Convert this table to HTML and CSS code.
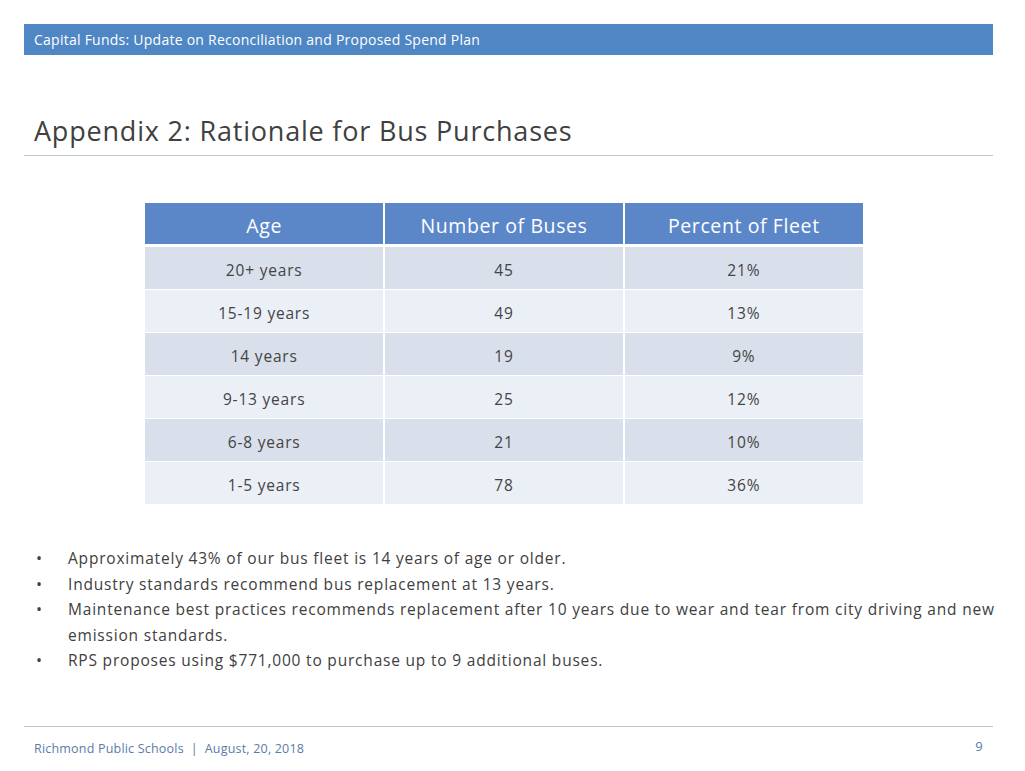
FILE: index.html
```html
<!DOCTYPE html>
<html>
<head>
<meta charset="utf-8">
<link rel="stylesheet" href="styles.css">
</head>
<body>
<div class="slide">
  <div class="topbar">Capital Funds: Update on Reconciliation and Proposed Spend Plan</div>
  <h1 class="title">Appendix 2: Rationale for Bus Purchases</h1>
  <div class="table-wrap">
    <table class="fleet">
      <thead>
        <tr><th>Age</th><th>Number of Buses</th><th>Percent of Fleet</th></tr>
      </thead>
      <tbody>
        <tr class="odd"><td>20+ years</td><td>45</td><td>21%</td></tr>
        <tr class="even"><td>15-19 years</td><td>49</td><td>13%</td></tr>
        <tr class="odd"><td>14 years</td><td>19</td><td>9%</td></tr>
        <tr class="even"><td>9-13 years</td><td>25</td><td>12%</td></tr>
        <tr class="odd"><td>6-8 years</td><td>21</td><td>10%</td></tr>
        <tr class="even"><td>1-5 years</td><td>78</td><td>36%</td></tr>
      </tbody>
    </table>
  </div>
  <ul class="bullets">
    <li>Approximately 43% of our bus fleet is 14 years of age or older.</li>
    <li>Industry standards recommend bus replacement at 13 years.</li>
    <li>Maintenance best practices recommends replacement after 10 years due to wear and tear from city driving and new emission standards.</li>
    <li>RPS proposes using $771,000 to purchase up to 9 additional buses.</li>
  </ul>
  <div class="footer">
    <span class="foot-text">Richmond Public Schools &nbsp;|&nbsp; August, 20, 2018</span>
    <span class="page">9</span>
  </div>
</div>
</body>
</html>
```

FILE: styles.css
```css
html, body {
  margin: 0;
  padding: 0;
  background: #ffffff;
}
.slide {
  width: 1025px;
  height: 771px;
  box-sizing: border-box;
  padding: 24px 32px 0 24px;
  font-family: "Open Sans", Lato, sans-serif;
  color: #3a3a3a;
  display: flex;
  flex-direction: column;
}
.topbar {
  height: 31px;
  background: #4f86c4;
  color: #ffffff;
  font-size: 14px;
  letter-spacing: 0.25px;
  line-height: 31px;
  padding-left: 10px;
}
.title {
  margin: 56px 0 0 0;
  font-weight: 400;
  font-size: 27px;
  letter-spacing: 0.8px;
  line-height: 40px;
  padding-left: 10px;
  padding-bottom: 4px;
  color: #404040;
  border-bottom: 1px solid #b9c9d6;
}
.table-wrap {
  margin-top: 47px;
  padding-left: 121px;
}
.fleet {
  border-collapse: collapse;
  width: 718px;
  font-size: 15.5px;
  letter-spacing: 0.8px;
  color: #444;
}
.fleet th, .fleet td {
  width: 33.33%;
  text-align: center;
  padding: 0;
  border-left: 2px solid #ffffff;
  border-right: 2px solid #ffffff;
}
.fleet th:first-child, .fleet td:first-child { border-left: none; }
.fleet th:last-child, .fleet td:last-child { border-right: none; }
.fleet th {
  background: #5b87c9;
  color: #ffffff;
  font-weight: 400;
  font-size: 19.5px;
  letter-spacing: 0.6px;
  height: 37px;
  padding-top: 4px;
  border-bottom: 3px solid #ffffff;
}
.fleet td {
  height: 39px;
  padding-top: 3px;
  border-top: 1px solid #ffffff;
}
.fleet tbody tr:first-child td { border-top: none; }
.fleet tr.odd td { background: #d9dfeb; }
.fleet tr.even td { background: #ebeff6; }
.bullets {
  margin: 42px -24px 0 0;
  padding: 0 0 0 44px;
  list-style: none;
  font-size: 15.5px;
  letter-spacing: 0.8px;
  line-height: 25.5px;
  color: #404040;
}
.bullets li {
  position: relative;
}
.bullets li::before {
  content: "•";
  position: absolute;
  left: -32px;
  font-size: 16px;
}
.footer {
  margin-top: auto;
  margin-bottom: 14px;
  border-top: 1px solid #b9c9d6;
  display: flex;
  justify-content: space-between;
  align-items: flex-start;
  padding: 13px 10px 0 10px;
  color: #5a7ba8;
  font-size: 12.5px;
  letter-spacing: 0.2px;
}
.page {
  font-size: 13px;
  margin-top: -3px;
}
```
